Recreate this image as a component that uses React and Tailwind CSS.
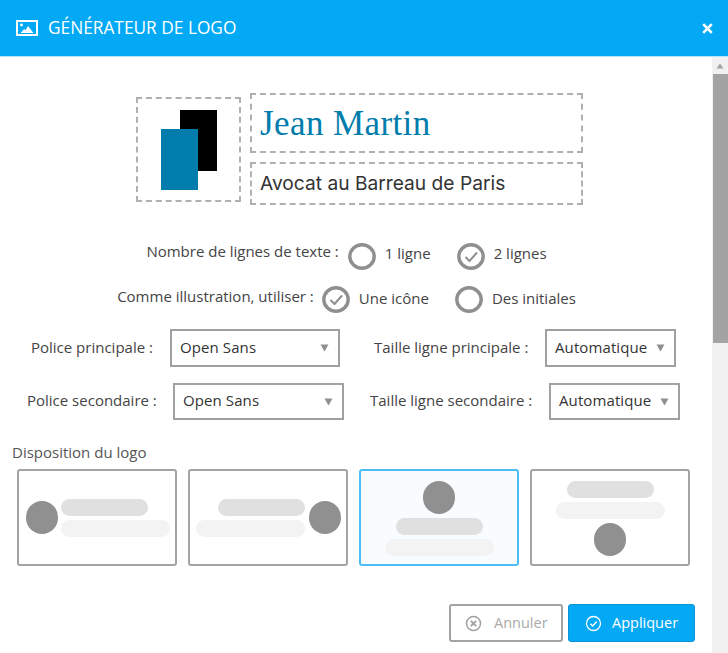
import React from "react";

const sans = "font-['Open_Sans',sans-serif]";

function Radio({ checked, label, pad }) {
  return (
    <div className="flex items-center gap-[9px]">
      <svg width="28" height="27" viewBox="0 0 28 27" className="shrink-0">
        <ellipse cx="14" cy="13.500" rx="12.200" ry="11.700" fill="#fff" stroke="#8f8f8f" strokeWidth="3.400" />
        {checked && <path d="M8.500 14l4 4 7.500-8.500" fill="none" stroke="#8f8f8f" strokeWidth="2" />}
      </svg>
      <span className={`text-[15px] text-[#444] ${pad}`}>{label}</span>
    </div>
  );
}

function Select({ value, w, h = "h-[38px]" }) {
  return (
    <div className={`${w} ${h} border-2 border-[#a0a0a0] flex items-center justify-between pl-[8px] pr-[9px] bg-white shrink-0`}>
      <span className="text-[15px] text-[#333] tracking-[0.1px] pb-[2px]">{value}</span>
      <svg width="9" height="8" viewBox="0 0 9 8"><path d="M0.500 0.500h8L4.500 7.500z" fill="#8f8f8f" /></svg>
    </div>
  );
}

function Card({ active, children, cls }) {
  return (
    <div className={`w-[160px] h-[97px] rounded-[3px] border-2 ${active ? "border-[#4dbef5] bg-[#f8fcff]" : "border-[#a3a3a3] bg-white"} flex ${cls}`}>
      {children}
    </div>
  );
}
const Dot = () => <div className="w-[32px] h-[33px] rounded-full bg-[#909090] shrink-0" />;
const Bar1 = () => <div className="w-[87px] h-[17px] rounded-[9px] bg-[#e0e0e0] shrink-0" />;
const Bar2 = () => <div className="w-[109px] h-[17px] rounded-[9px] bg-[#f3f3f3] shrink-0" />;

export default function App() {
  return (
    <div className={`w-[728px] h-[653px] overflow-hidden bg-white flex flex-col ${sans}`}>
      <header className="h-[57px] shrink-0 bg-[#03a9f4] border-b border-[#b5e5fb] flex items-center justify-between pl-[16px] pr-[15px] text-white">
        <div className="flex items-center gap-[10px]">
          <svg width="22" height="16" viewBox="0 0 22 16">
            <rect x="1" y="1" width="20" height="14" fill="none" stroke="#fff" strokeWidth="2" />
            <path d="M4.500 13l3.800-4 1.200 1.200 2.500-4.200 5.500 7z" fill="#fff" />
            <circle cx="5.500" cy="5" r="1.400" fill="#fff" />
          </svg>
          <span className="text-[17.300px] leading-none">GÉNÉRATEUR DE LOGO</span>
        </div>
        <svg width="11" height="11" viewBox="0 0 11 11"><path d="M1.200 1.200l8.600 8.600M9.800 1.200l-8.600 8.600" stroke="#fff" strokeWidth="2.600" /></svg>
      </header>
      <div className="flex flex-1 min-h-0">
        <main className="w-[712px] shrink-0 flex flex-col">
          <div className="flex justify-center gap-[9px] pt-[36px] pl-[7px]">
            <div className="w-[105px] h-[105px] mt-[4px] border-2 border-dashed border-[#b0b0b0] flex items-center justify-center">
              <svg width="56" height="80" viewBox="0 0 56 80">
                <rect x="19" y="0" width="37" height="61" fill="#000" />
                <rect x="0" y="19" width="37" height="61" fill="#007dac" />
              </svg>
            </div>
            <div className="flex flex-col gap-[9px]">
              <div className="w-[333px] h-[60px] border-2 border-dashed border-[#b0b0b0] flex items-center pl-[8px]">
                <span className="font-['Liberation_Serif',serif] text-[35px] leading-none text-[#007dac] tracking-[0.4px]">Jean Martin</span>
              </div>
              <div className="w-[333px] h-[43px] border-2 border-dashed border-[#b0b0b0] flex items-center pl-[8px]">
                <span className="font-['Inter',sans-serif] text-[19.200px] leading-none text-[#333]">Avocat au Barreau de Paris</span>
              </div>
            </div>
          </div>

          <div className="flex justify-center items-center mt-[38px] h-[27px] pr-[19px]">
            <span className="text-[15px] text-[#444] mr-[9px] -mt-[10px]">Nombre de lignes de texte :</span>
            <Radio label="1 ligne" pad="pb-[7px]" />
            <div className="w-[26px]" />
            <Radio checked label="2 lignes" pad="pb-[7px]" />
          </div>
          <div className="flex justify-center items-center mt-[16px] h-[27px] pr-[19px]">
            <span className="text-[15px] text-[#444] mr-[8px] -mt-[6px]">Comme illustration, utiliser :</span>
            <Radio checked label="Une icône" pad="pb-[3px]" />
            <div className="w-[26px]" />
            <Radio label="Des initiales" pad="pb-[3px]" />
          </div>

          <div className="flex items-center mt-[16px] pl-[31px]">
            <span className="text-[15px] text-[#444] w-[139px] shrink-0 pb-[2px]">Police principale :</span>
            <Select value="Open Sans" w="w-[170px]" />
            <span className="text-[15px] text-[#444] ml-[34px] w-[171px] shrink-0 pb-[2px]">Taille ligne principale :</span>
            <Select value="Automatique" w="w-[131px]" />
          </div>
          <div className="flex items-center mt-[16px] pl-[27px]">
            <span className="text-[15px] text-[#444] w-[146px] shrink-0 pb-[2px]">Police secondaire :</span>
            <Select value="Open Sans" w="w-[171px]" h="h-[37px]" />
            <span className="text-[15px] text-[#444] ml-[26px] w-[179px] shrink-0 pb-[2px]">Taille ligne secondaire :</span>
            <Select value="Automatique" w="w-[131px]" h="h-[37px]" />
          </div>

          <div className="text-[15px] text-[#555] pl-[12px] mt-[23px] leading-[19px]">Disposition du logo</div>
          <div className="flex gap-[11px] pl-[17px] mt-[7px]">
            <Card cls="items-center pl-[7px] gap-[3px]">
              <Dot />
              <div className="flex flex-col gap-[4px]"><Bar1 /><Bar2 /></div>
            </Card>
            <Card cls="items-center justify-end pr-[5px] gap-[4px]">
              <div className="flex flex-col items-end gap-[4px]"><Bar1 /><Bar2 /></div>
              <Dot />
            </Card>
            <Card active cls="flex-col items-center pt-[10px] gap-[4px]">
              <Dot />
              <Bar1 />
              <Bar2 />
            </Card>
            <Card cls="flex-col items-center pt-[10px] gap-[4px]">
              <Bar1 />
              <Bar2 />
              <Dot />
            </Card>
          </div>

          <div className="flex justify-end gap-[5px] mt-[38px] pr-[17px]">
            <div className="w-[114px] h-[38px] border-2 border-[#a3a3a3] rounded-[3px] flex items-center pl-[14px] gap-[12px]">
              <svg width="17" height="17" viewBox="0 0 17 17">
                <circle cx="8.500" cy="8.500" r="7" fill="none" stroke="#a0a0a0" strokeWidth="1.500" />
                <path d="M5.800 5.800l5.400 5.400M11.200 5.800l-5.400 5.400" stroke="#a0a0a0" strokeWidth="1.800" />
              </svg>
              <span className="text-[14.500px] text-[#aaa]">Annuler</span>
            </div>
            <div className="w-[127px] h-[38px] bg-[#03a9f4] border border-[#0a93d6] rounded-[3px] flex items-center pl-[16px] gap-[10px] text-white">
              <svg width="17" height="17" viewBox="0 0 17 17">
                <circle cx="8.500" cy="8.500" r="7" fill="none" stroke="#fff" strokeWidth="1.300" />
                <path d="M5.500 8.800l2.200 2.200 4-4.500" fill="none" stroke="#fff" strokeWidth="1.500" />
              </svg>
              <span className="text-[14.500px]">Appliquer</span>
            </div>
          </div>
        </main>
        <aside className="w-[16px] shrink-0 bg-[#f1f1f1] flex flex-col items-center">
          <div className="h-[17px] w-full flex items-center justify-center">
            <svg width="8" height="6" viewBox="0 0 8 6"><path d="M4 0.500L7.500 5.500H0.500z" fill="#a3a3a3" /></svg>
          </div>
          <div className="w-[15px] h-[269px] bg-[#a3a3a3] ml-[1px]" />
        </aside>
      </div>
    </div>
  );
}
